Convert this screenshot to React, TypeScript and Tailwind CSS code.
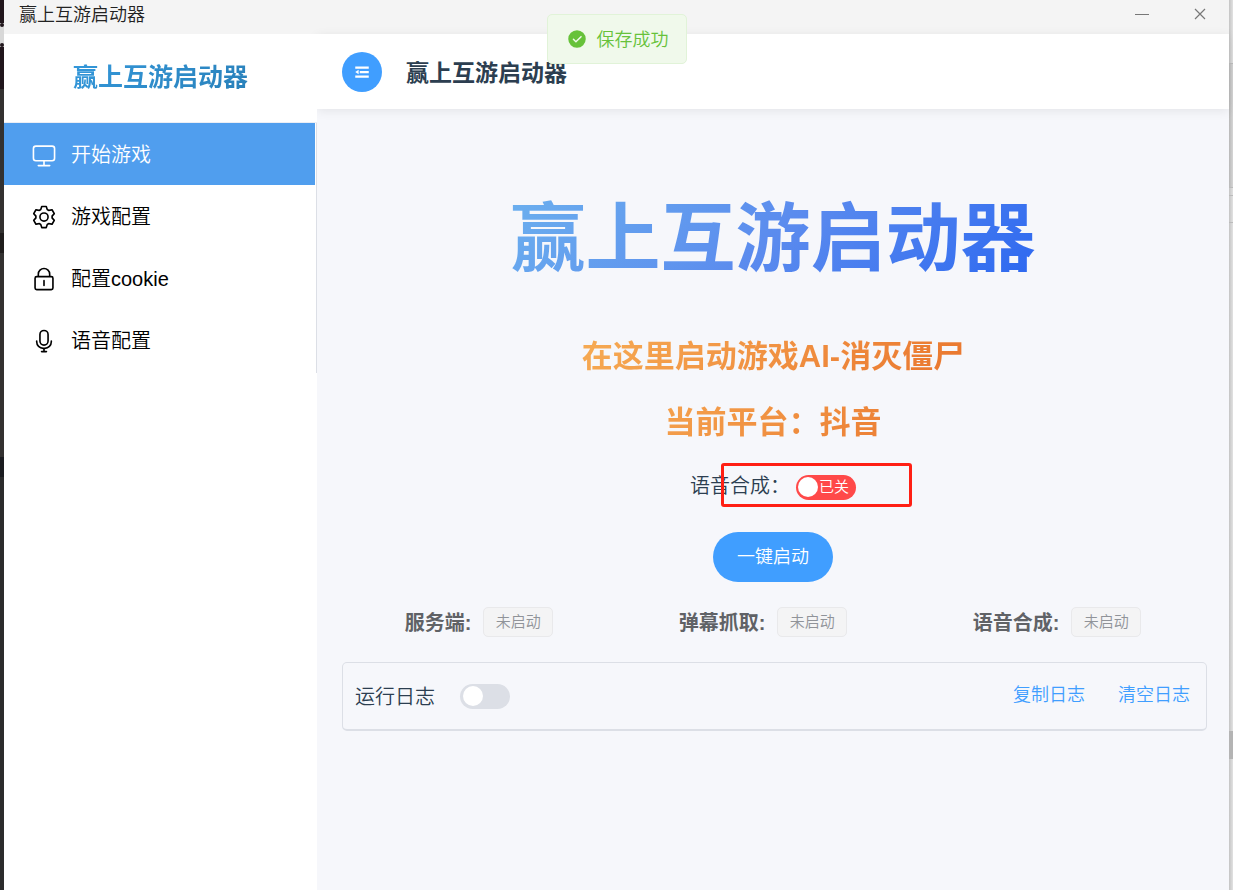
import { useState } from 'react';

const ICONS = {
  monitor:
    'M544 768v128h192a32 32 0 1 1 0 64H288a32 32 0 1 1 0-64h192V768H192A128 128 0 0 1 64 640V256a128 128 0 0 1 128-128h640a128 128 0 0 1 128 128v384a128 128 0 0 1-128 128H544zM192 192a64 64 0 0 0-64 64v384a64 64 0 0 0 64 64h640a64 64 0 0 0 64-64V256a64 64 0 0 0-64-64H192z',
  setting:
    'M600.704 64a32 32 0 0 1 30.464 22.208l35.2 109.376c14.784 7.232 28.928 15.36 42.432 24.512l112.384-24.192a32 32 0 0 1 34.432 15.36L944.32 364.8a32 32 0 0 1-4.032 37.504l-77.12 85.12a357.12 357.12 0 0 1 0 49.024l77.12 85.248a32 32 0 0 1 4.032 37.504l-88.704 153.6a32 32 0 0 1-34.432 15.296L708.8 803.904c-13.44 9.088-27.648 17.28-42.368 24.512l-35.264 109.376A32 32 0 0 1 600.704 960H423.296a32 32 0 0 1-30.464-22.208L357.696 828.48a351.616 351.616 0 0 1-42.56-24.64l-112.32 24.256a32 32 0 0 1-34.432-15.36L79.68 659.2a32 32 0 0 1 4.032-37.504l77.12-85.248a357.12 357.12 0 0 1 0-48.896l-77.12-85.248A32 32 0 0 1 79.68 364.8l88.704-153.6a32 32 0 0 1 34.432-15.296l112.32 24.256c13.568-9.152 27.776-17.408 42.56-24.64l35.2-109.312A32 32 0 0 1 423.232 64H600.64zm-23.424 64H446.72l-36.352 113.088-24.512 11.968a294.113 294.113 0 0 0-34.816 20.096l-22.656 15.36-116.224-25.088-65.28 113.152 79.68 88.192-1.92 27.136a293.12 293.12 0 0 0 0 40.192l1.92 27.136-79.808 88.192 65.344 113.152 116.224-25.024 22.656 15.296a294.113 294.113 0 0 0 34.816 20.096l24.512 11.968L446.72 896h130.688l36.48-113.152 24.448-11.904a288.282 288.282 0 0 0 34.752-20.096l22.592-15.296 116.288 25.024 65.28-113.152-79.744-88.192 1.92-27.136a293.12 293.12 0 0 0 0-40.256l-1.92-27.136 79.808-88.128-65.344-113.152-116.288 24.96-22.592-15.232a287.616 287.616 0 0 0-34.752-20.096l-24.448-11.904L577.344 128zM512 320a192 192 0 1 1 0 384 192 192 0 0 1 0-384zm0 64a128 128 0 1 0 0 256 128 128 0 0 0 0-256z',
  lock: 'M224 448a32 32 0 0 0-32 32v384a32 32 0 0 0 32 32h576a32 32 0 0 0 32-32V480a32 32 0 0 0-32-32H224zm0-64h576a96 96 0 0 1 96 96v384a96 96 0 0 1-96 96H224a96 96 0 0 1-96-96V480a96 96 0 0 1 96-96z M512 544a32 32 0 0 1 32 32v192a32 32 0 1 1-64 0V576a32 32 0 0 1 32-32zm192-160v-64a192 192 0 1 0-384 0v64h384zM512 64a256 256 0 0 1 256 256v128H256V320A256 256 0 0 1 512 64z',
  microphone:
    'M512 128a128 128 0 0 0-128 128v256a128 128 0 1 0 256 0V256a128 128 0 0 0-128-128zm0-64a192 192 0 0 1 192 192v256a192 192 0 1 1-384 0V256A192 192 0 0 1 512 64zm-32 832v-64a288 288 0 0 1-288-288v-32a32 32 0 0 1 64 0v32a224 224 0 0 0 224 224h64a224 224 0 0 0 224-224v-32a32 32 0 1 1 64 0v32a288 288 0 0 1-288 288v64h64a32 32 0 1 1 0 64H416a32 32 0 1 1 0-64h64z',
  fold: 'M896 192H128v128h768V192zm0 256H384v128h512V448zm0 256H128v128h768V704zM320 384 128 512l192 128V384z',
  success:
    'M512 64a448 448 0 1 1 0 896 448 448 0 0 1 0-896zm-55.808 536.384-99.52-99.584a38.4 38.4 0 1 0-54.336 54.336l126.72 126.72a38.272 38.272 0 0 0 54.336 0l262.4-262.464a38.4 38.4 0 1 0-54.272-54.336L456.192 600.384z',
};

type IconName = keyof typeof ICONS;

const MENU: { key: string; label: string; icon: IconName }[] = [
  { key: 'start', label: '开始游戏', icon: 'monitor' },
  { key: 'game', label: '游戏配置', icon: 'setting' },
  { key: 'cookie', label: '配置cookie', icon: 'lock' },
  { key: 'voice', label: '语音配置', icon: 'microphone' },
];

const SERVICES = ['服务端', '弹幕抓取', '语音合成'];

function Icon({ name, className }: { name: IconName; className: string }) {
  return (
    <svg viewBox="0 0 1024 1024" fill="currentColor" className={className} aria-hidden="true">
      <path d={ICONS[name]} />
    </svg>
  );
}

function TitleBar() {
  return (
    <div className="flex h-[34px] items-start justify-between bg-[#f4f4f4] pl-[15px]">
      <span className="text-[18px] leading-[30px] text-[#222]">赢上互游启动器</span>
      <div className="flex text-[#777]">
        <button aria-label="最小化" className="flex h-7 w-[58px] items-center justify-center">
          <svg viewBox="0 0 14 14" className="size-3.5" stroke="currentColor">
            <path d="M0 7.5h14" />
          </svg>
        </button>
        <button aria-label="关闭" className="flex h-7 w-[58px] items-center justify-center">
          <svg viewBox="0 0 12 12" className="size-3" stroke="currentColor" strokeWidth="1.2">
            <path d="M1 1l10 10M11 1L1 11" />
          </svg>
        </button>
      </div>
    </div>
  );
}

function Sidebar() {
  const [active, setActive] = useState('start');

  return (
    <aside className="z-10 w-[313px] shrink-0 bg-white">
      <div className="flex h-[89px] items-center justify-center border-b border-[#ebeef5]">
        <span className="bg-linear-135 from-[#3498db] to-[#2980b9] bg-clip-text text-[25px] font-bold text-transparent">
          赢上互游启动器
        </span>
      </div>
      <nav className="flex h-[250px] flex-col border-r border-[#dcdfe6] pr-px">
        {MENU.map((item) => (
          <button
            key={item.key}
            onClick={() => setActive(item.key)}
            className={`flex h-[62px] items-center gap-3.5 pt-px pl-[27px] text-[20px] ${
              active === item.key ? 'bg-[#509eee] text-white' : 'text-black'
            }`}
          >
            <Icon name={item.icon} className="size-[26px]" />
            <span>{item.label}</span>
          </button>
        ))}
      </nav>
    </aside>
  );
}

function ServiceStatus({ name }: { name: string }) {
  return (
    <div className="flex h-[30px] items-center gap-3">
      <span className="pt-0.5 text-[20px] font-bold text-[#606266]">{name}:</span>
      <span className="flex h-[30px] w-[70px] items-center justify-center rounded-[5px] border border-[#e9e9eb] bg-[#f4f4f5] text-[15px] text-[#909399]">
        未启动
      </span>
    </div>
  );
}

function Home() {
  const [voiceOn, setVoiceOn] = useState(false);
  const [logOn, setLogOn] = useState(false);

  return (
    <main className="flex flex-1 flex-col items-center bg-[#f6f7fb] px-[25px] pt-20">
      <h1 className="bg-linear-135 from-[#6cb0ee] via-[#5b8bee] to-[#2b66f0] bg-clip-text text-[75px] leading-[100px] font-bold text-transparent">
        赢上互游启动器
      </h1>

      <div className="mt-12 flex flex-col gap-[26px] text-center text-[31px] leading-[40px] font-bold">
        <p className="bg-linear-135 from-[#f6ab54] to-[#e9752d] bg-clip-text text-transparent">
          在这里启动游戏AI-消灭僵尸
        </p>
        <p className="bg-linear-135 from-[#f6ab54] to-[#e9752d] bg-clip-text text-transparent">
          当前平台：抖音
        </p>
      </div>

      <div className="relative mt-[31px] flex h-[26px] items-center gap-1.5">
        <label htmlFor="voice" className="pb-0.5 text-[20px] leading-[26px] text-[#2c3e50]">
          语音合成：
        </label>
        <label
          className={`flex h-[25px] w-[60px] cursor-pointer items-center gap-px rounded-full px-0.5 text-[15px] text-white ${
            voiceOn ? 'flex-row-reverse bg-[#13ce66]' : 'bg-[#ff4949]'
          }`}
        >
          <input
            id="voice"
            type="checkbox"
            role="switch"
            className="sr-only"
            checked={voiceOn}
            onChange={(e) => setVoiceOn(e.target.checked)}
          />
          <span className="size-5 shrink-0 rounded-full bg-white" />
          <span className="whitespace-nowrap">{voiceOn ? '已开' : '已关'}</span>
        </label>
        <div className="pointer-events-none absolute -top-[11px] left-[31px] h-11 w-[191px] rounded-[3px] border-[3px] border-[#ff1f14]" />
      </div>

      <button className="mt-8 h-[50px] w-[120px] rounded-full bg-[#409eff] text-[18px] text-white">
        一键启动
      </button>

      <div className="mt-[25px] flex w-full justify-around">
        {SERVICES.map((name) => (
          <ServiceStatus key={name} name={name} />
        ))}
      </div>

      <section className="mt-[25px] -mr-[3px] flex h-[69px] items-center self-stretch rounded-[5px] border border-b-2 border-[#dcdfe6] pr-4 pl-3">
        <label htmlFor="log" className="pt-0.5 text-[20px] text-[#2c3e50]">
          运行日志
        </label>
        <label
          className={`ml-[25px] flex h-[25px] w-[50px] cursor-pointer items-center rounded-full px-[3px] ${
            logOn ? 'justify-end bg-[#409eff]' : 'bg-[#dcdfe6]'
          }`}
        >
          <input
            id="log"
            type="checkbox"
            role="switch"
            className="sr-only"
            checked={logOn}
            onChange={(e) => setLogOn(e.target.checked)}
          />
          <span className="size-5 rounded-full bg-white" />
        </label>
        <div className="ml-auto flex gap-[33px] pb-0.5 text-[18px] text-[#409eff]">
          <button>复制日志</button>
          <button>清空日志</button>
        </div>
      </section>
    </main>
  );
}

function Toast({ text }: { text: string }) {
  return (
    <div
      role="status"
      className="absolute top-3.5 left-1/2 z-20 flex h-[50px] w-[140px] -translate-x-1/2 items-center gap-2.5 rounded-[5px] border border-[#e1f3d8] bg-[#f0f9eb] pl-[19px] text-[18px] whitespace-nowrap text-[#67c23a]"
    >
      <Icon name="success" className="size-5" />
      <span className="pt-0.5">{text}</span>
    </div>
  );
}

export default function App() {
  return (
    <div className="relative flex min-h-screen font-['Liberation_Sans','Noto_Sans_CJK_SC',sans-serif] font-[350]">
      {/* desktop behind the window, left edge */}
      <div className="flex w-1 shrink-0 flex-col bg-[#2b2b2c]">
        <div className="h-[23px] bg-[#21161c]" />
        <div className="h-6 border-y-4 border-dotted border-[#21161c] bg-[#d8d8d8]" />
        <div className="h-[42px] bg-[#21161c]" />
        <div className="h-[144px] bg-[#333130]" />
        <div className="h-5 bg-[#1f1d1c]" />
        <div className="h-[204px] bg-[#333130]" />
        <div className="h-5 bg-[#1b1c20]" />
      </div>

      <div className="flex min-w-0 flex-1 flex-col">
        <TitleBar />
        <div className="flex flex-1">
          <Sidebar />
          <div className="flex min-w-0 flex-1 flex-col">
            <header className="z-0 flex h-[75px] items-center gap-6 bg-white pl-[25px] shadow-[0_2px_10px_rgba(0,0,0,0.08)]">
              <button
                aria-label="折叠菜单"
                className="flex size-10 items-center justify-center rounded-full bg-[#409eff] text-white"
              >
                <Icon name="fold" className="size-[18px]" />
              </button>
              <h2 className="pt-1 text-[23px] font-bold text-[#2c3e50]">赢上互游启动器</h2>
            </header>
            <Home />
          </div>
        </div>
      </div>

      {/* desktop behind the window, right edge */}
      <div className="flex w-1 shrink-0 flex-col bg-linear-to-r from-[#c4c4c4] to-[#e2e2e2]">
        <div className="h-16 border-b border-[#bbb]" />
        <div className="h-[124px] border-b border-[#bbb] bg-linear-to-r from-[#b8b8b8] to-[#d6d6d6]" />
        <div className="h-2 border-b border-[#bbb]" />
        <div className="h-[27px] border-b border-[#bbb]" />
        <div className="mt-[508px] h-7 bg-[#b4b4b4]" />
      </div>

      <Toast text="保存成功" />
    </div>
  );
}
